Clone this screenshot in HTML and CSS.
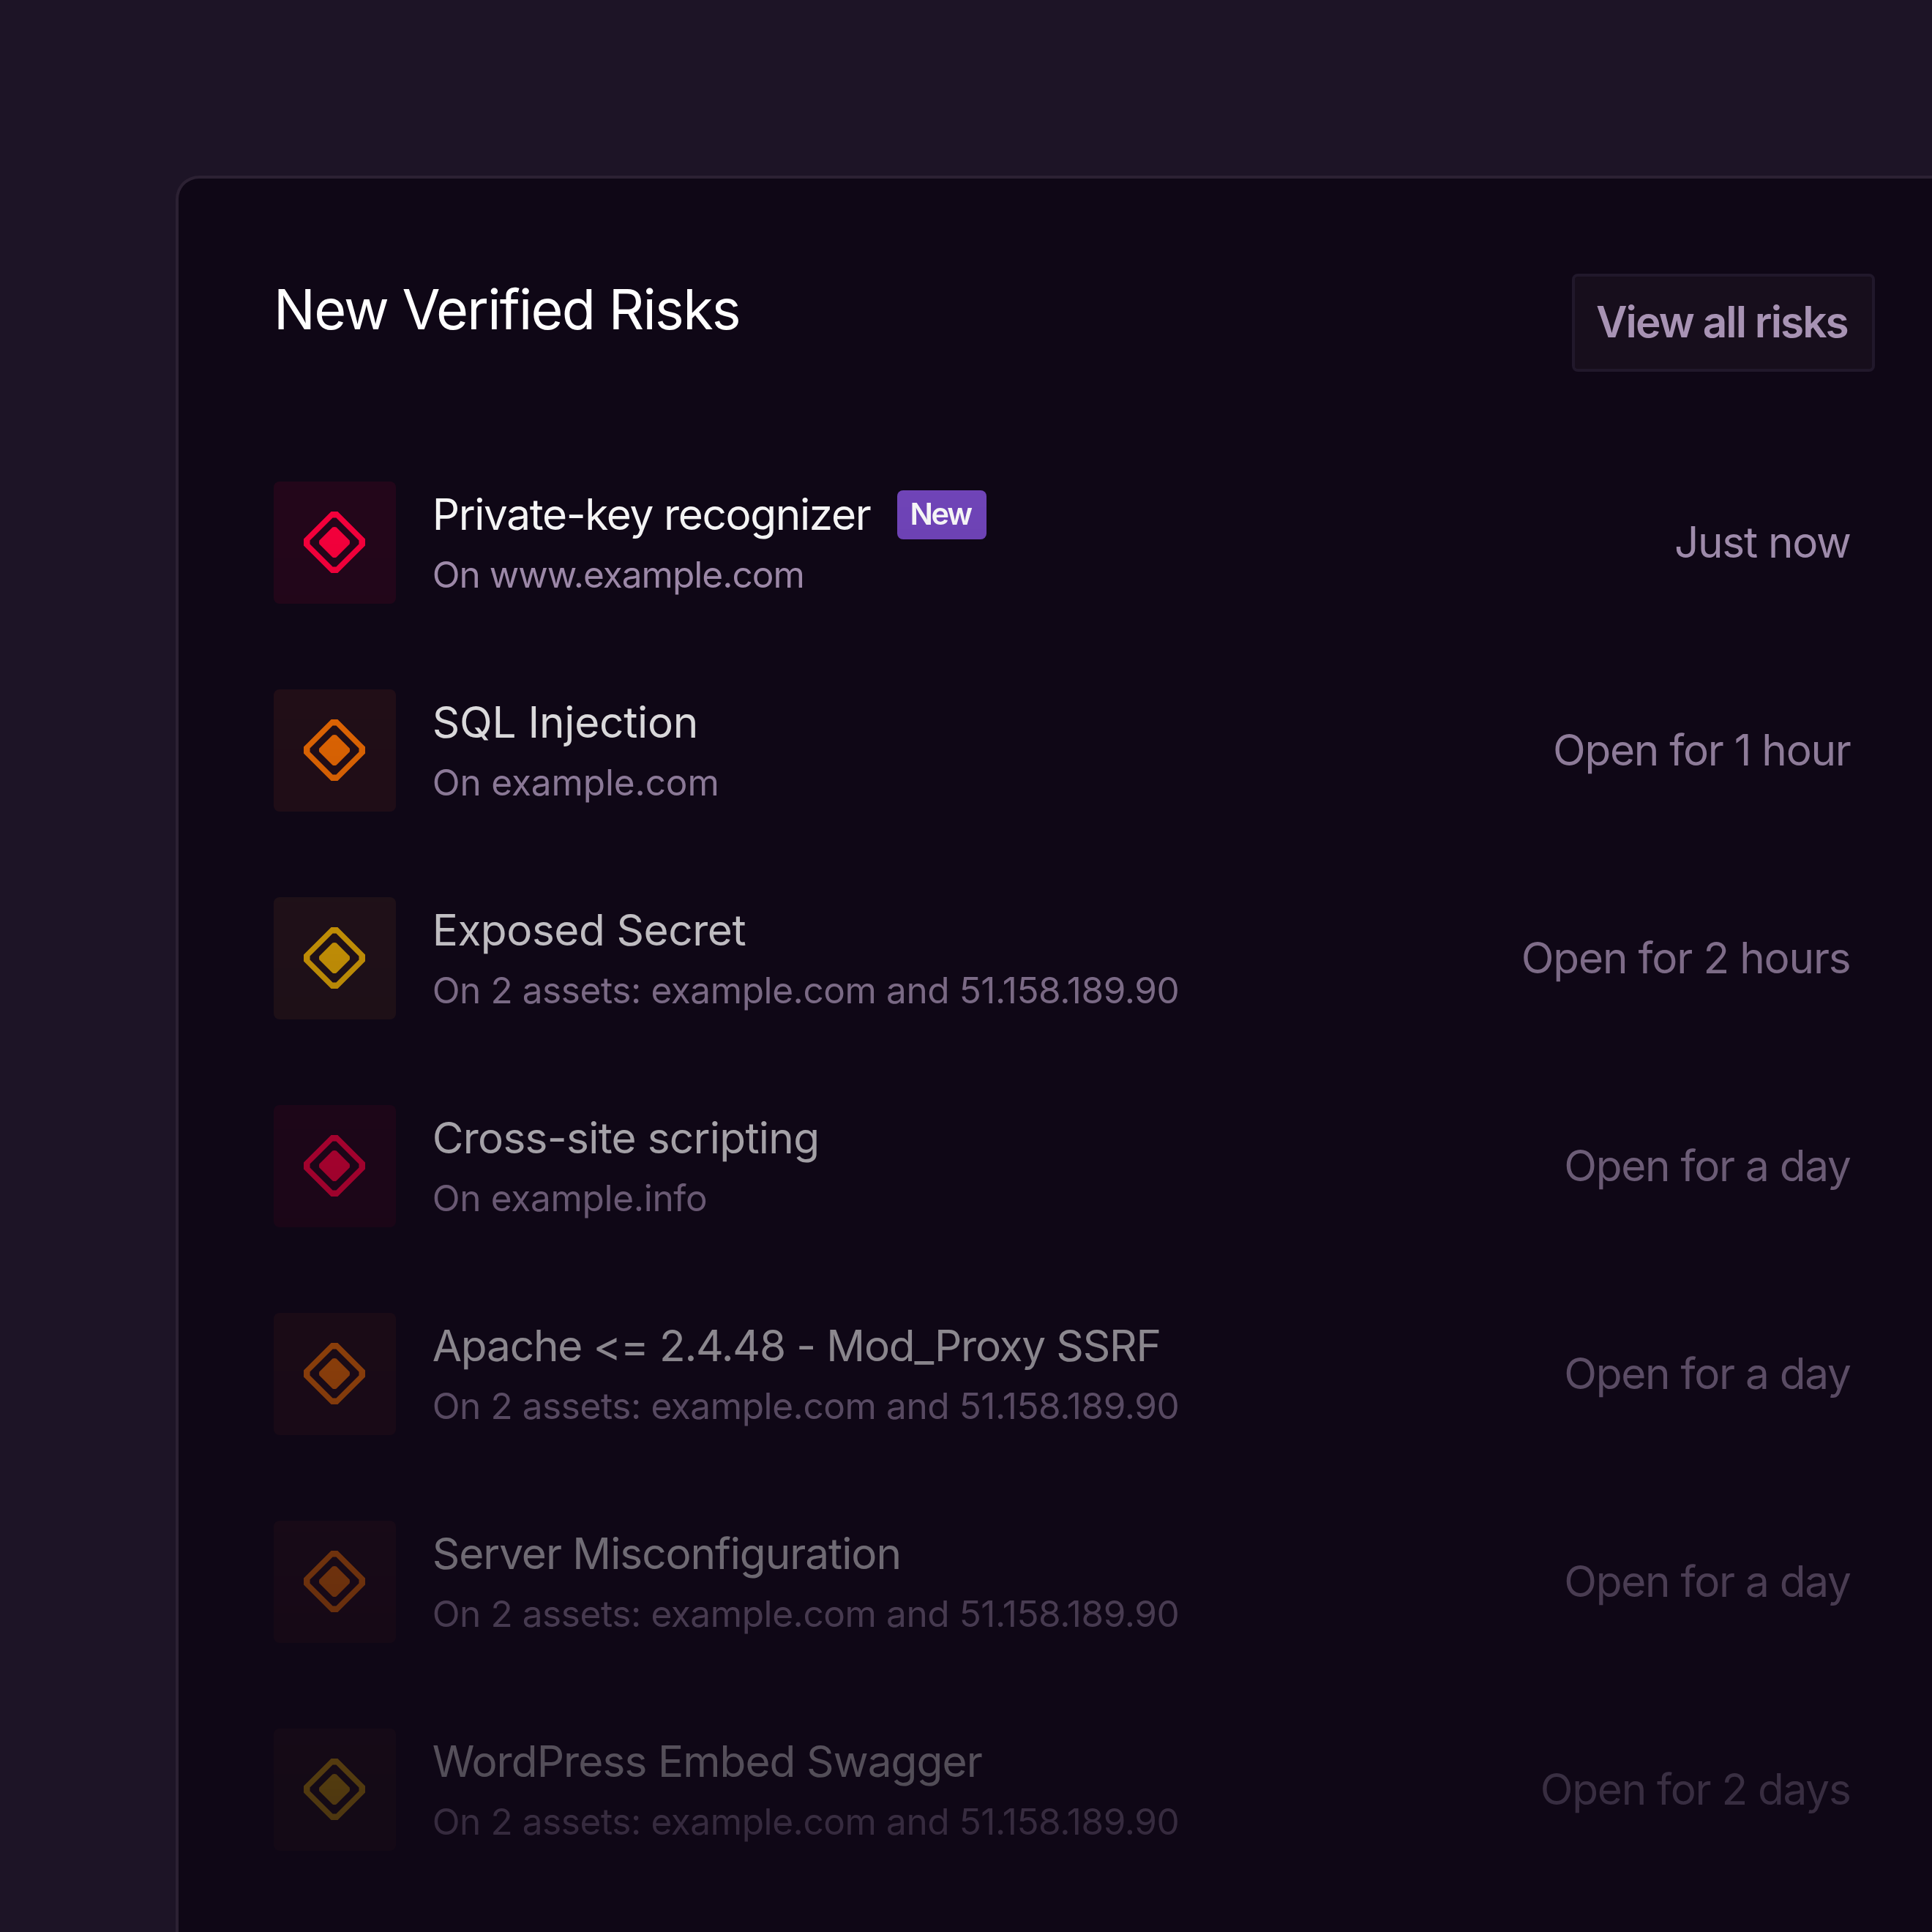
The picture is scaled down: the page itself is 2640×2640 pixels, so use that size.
FILE: index.html
```html
<!DOCTYPE html>
<html lang="en">
<head>
<meta charset="utf-8">
<title>New Verified Risks</title>
<link rel="stylesheet" href="styles.css">
</head>
<body>
<svg class="sprite" aria-hidden="true">
  <symbol id="severity" viewBox="0 0 84 84">
    <path fill="currentColor" fill-rule="evenodd" d="M37.6 0H46.4L84 37.6V46.4L46.4 84H37.6L0 46.4V37.6ZM39.6 8.5L8.5 39.6V44.4L39.6 75.5H44.4L75.5 44.4V39.6L44.4 8.5Z"/>
    <path fill="currentColor" d="M39.4 21.4Q42 20.4 44.6 21.4L62.6 39.4Q63.6 42 62.6 44.6L44.6 62.6Q42 63.6 39.4 62.6L21.4 44.6Q20.4 42 21.4 39.4Z"/>
  </symbol>
</svg>
<main class="panel">
  <header class="panel-header">
    <h1 class="panel-title">New Verified Risks</h1>
    <button class="view-all" type="button">View all risks</button>
  </header>
  <ul class="risks">
    <li class="risk critical private-key">
      <span class="severity"><svg><use href="#severity"/></svg></span>
      <div class="details">
        <div class="heading"><h2 class="name">Private-key recognizer</h2><span class="badge">New</span></div>
        <p class="assets">On www.example.com</p>
      </div>
      <time class="age">Just now</time>
    </li>
    <li class="risk high sql">
      <span class="severity"><svg><use href="#severity"/></svg></span>
      <div class="details">
        <div class="heading"><h2 class="name">SQL Injection</h2></div>
        <p class="assets">On example.com</p>
      </div>
      <time class="age">Open for 1 hour</time>
    </li>
    <li class="risk medium secret">
      <span class="severity"><svg><use href="#severity"/></svg></span>
      <div class="details">
        <div class="heading"><h2 class="name">Exposed Secret</h2></div>
        <p class="assets">On 2 assets: example.com and 51.158.189.90</p>
      </div>
      <time class="age">Open for 2 hours</time>
    </li>
    <li class="risk critical xss">
      <span class="severity"><svg><use href="#severity"/></svg></span>
      <div class="details">
        <div class="heading"><h2 class="name">Cross-site scripting</h2></div>
        <p class="assets">On example.info</p>
      </div>
      <time class="age">Open for a day</time>
    </li>
    <li class="risk high apache">
      <span class="severity"><svg><use href="#severity"/></svg></span>
      <div class="details">
        <div class="heading"><h2 class="name">Apache &lt;= 2.4.48 - Mod_Proxy SSRF</h2></div>
        <p class="assets">On 2 assets: example.com and 51.158.189.90</p>
      </div>
      <time class="age">Open for a day</time>
    </li>
    <li class="risk high server">
      <span class="severity"><svg><use href="#severity"/></svg></span>
      <div class="details">
        <div class="heading"><h2 class="name">Server Misconfiguration</h2></div>
        <p class="assets">On 2 assets: example.com and 51.158.189.90</p>
      </div>
      <time class="age">Open for a day</time>
    </li>
    <li class="risk medium wordpress">
      <span class="severity"><svg><use href="#severity"/></svg></span>
      <div class="details">
        <div class="heading"><h2 class="name">WordPress Embed Swagger</h2></div>
        <p class="assets">On 2 assets: example.com and 51.158.189.90</p>
      </div>
      <time class="age">Open for 2 days</time>
    </li>
  </ul>
</main>
</body>
</html>
```
FILE: styles.css
```css
* {
  box-sizing: border-box;
  margin: 0;
  padding: 0;
}

html,
body {
  height: 100%;
  overflow: hidden;
}

body {
  padding: 240px 0 0 240px;
  background: #1d1426;
  font-family: Inter, "Liberation Sans", sans-serif;
  font-weight: 400;
}

.sprite {
  display: none;
}

.panel {
  height: 2400px;
  padding: 130px 78px 0 130px;
  border: 4px solid #2c2133;
  border-right: 0;
  border-bottom: 0;
  border-top-left-radius: 32px;
  background: #0f0716;
}

.panel-header {
  display: flex;
  justify-content: space-between;
  align-items: flex-start;
}

.panel-title {
  color: #fff;
  font-size: 75.5px;
  font-weight: 400;
  line-height: 98px;
  letter-spacing: -1.75px;
}

.view-all {
  width: 414px;
  height: 134px;
  padding: 0 0 3px 29px;
  border: 4px solid #21182b;
  border-radius: 8px;
  background: #170e1c;
  color: #a893b4;
  font: inherit;
  font-size: 58.5px;
  font-weight: 600;
  letter-spacing: -1.95px;
  text-align: left;
  white-space: nowrap;
}

.risks {
  display: flex;
  flex-direction: column;
  gap: 117.33px;
  margin: 150px 33.5px 0 0;
  list-style: none;
  -webkit-mask-image: linear-gradient(rgb(0 0 0 / .975), rgb(0 0 0 / .243));
  mask-image: linear-gradient(rgb(0 0 0 / .975), rgb(0 0 0 / .243));
}

.risk {
  display: flex;
  align-items: center;
  height: 166.67px;
}

.severity {
  display: grid;
  flex: none;
  place-items: center;
  width: 166.67px;
  height: 166.67px;
  margin-right: 50px;
  border-radius: 8px;
}

.severity svg {
  width: 84px;
  height: 84px;
}

.critical .severity {
  background: rgb(255 0 61 / .09);
  color: #ff003d;
}

.high .severity {
  background: rgb(255 105 40 / .09);
  color: #ff7300;
}

.medium .severity {
  background: rgb(255 150 60 / .09);
  color: #ffbe00;
}

.details {
  flex: 1;
  align-self: flex-start;
  padding-top: 9px;
  white-space: nowrap;
}

.heading {
  display: flex;
  align-items: flex-start;
  height: 72px;
}

.name {
  color: #fff;
  font-size: 58.5px;
  font-weight: 400;
  line-height: 72px;
}

.badge {
  width: 121.5px;
  height: 66.67px;
  margin: 3px 0 0 37px;
  padding-left: 17px;
  border-radius: 8px;
  background: #7346bd;
  color: #fff;
  font-size: 41.5px;
  font-weight: 600;
  line-height: 65px;
  letter-spacing: -2.3px;
}

.assets {
  margin-top: 15.7px;
  color: #a893b4;
  font-size: 49.5px;
  line-height: 60px;
  letter-spacing: -.41px;
}

.age {
  padding-bottom: .5px;
  color: #a893b4;
  font-size: 58.5px;
  line-height: 72px;
  letter-spacing: -1.28px;
  white-space: nowrap;
}

.private-key .name { letter-spacing: -1.35px; }
.private-key .assets { letter-spacing: -.98px; }
.private-key .age { letter-spacing: -1.3px; }
.sql .name { letter-spacing: -.25px; }
.sql .assets { letter-spacing: -.12px; }
.secret .name { letter-spacing: -.44px; }
.secret .age { letter-spacing: -1.17px; }
.xss .name { letter-spacing: -.7px; }
.xss .assets { letter-spacing: -.3px; }
.apache .name { letter-spacing: -1.18px; }
.server .name { letter-spacing: -1.03px; }
.wordpress .name { letter-spacing: -.91px; }
```
